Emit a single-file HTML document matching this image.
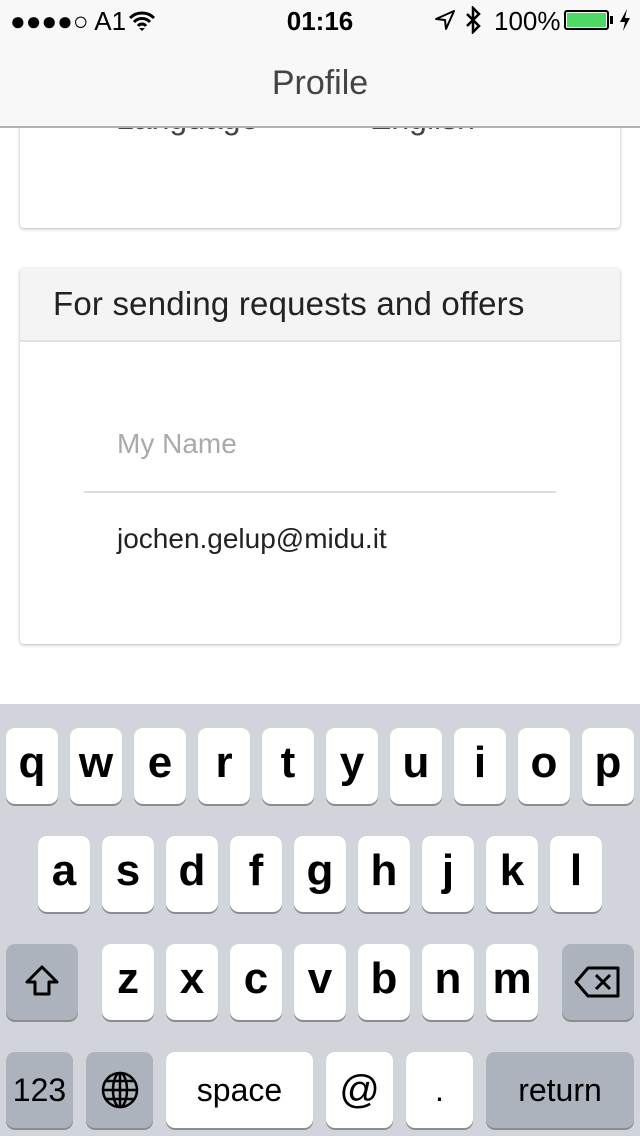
<!DOCTYPE html>
<html><head><meta charset="utf-8"><style>
*{margin:0;padding:0;box-sizing:border-box}
body{width:640px;height:1136px;background:#fff;font-family:"Liberation Sans",Arial,sans-serif;position:relative;overflow:hidden}
.abs{position:absolute}
.nav{left:0;top:0;width:640px;height:128px;background:#f8f8f8;border-bottom:2px solid #b2b2b2;z-index:5}
.card{left:20px;width:600px;background:#fff;border-radius:4px;box-shadow:0 1px 3px rgba(0,0,0,.3)}
.kb{left:0;top:704px;width:640px;height:432px;background:#d1d5db}
.k{position:absolute;width:52px;height:76px;background:#fff;border-radius:9px;box-shadow:0 2px 0 #8a8c90;font-size:44px;font-weight:bold;color:#000;text-align:center;line-height:70px}
.g{background:#acb3bd}
.s{font-size:32px;font-weight:normal;line-height:76px}
</style></head><body>
<div class="abs card" style="top:100px;height:128px"></div>
<div class="abs" style="left:116px;top:100px;font-size:32px;color:#444">Language</div>
<div class="abs" style="left:370px;top:100px;font-size:32px;color:#444">English</div>
<div class="abs card" style="top:268px;height:376px;overflow:hidden">
  <div style="height:74px;background:#f4f4f4;border-bottom:2px solid #e2e2e2;font-size:33px;color:#222;padding:17px 0 0 33px;white-space:nowrap;letter-spacing:0.2px">For sending requests and offers</div>
</div>
<div class="abs" style="left:117px;top:428px;font-size:28px;color:#aaa">My Name</div>
<div class="abs" style="left:84px;top:491px;width:472px;height:2px;background:#ddd"></div>
<div class="abs" style="left:117px;top:523px;font-size:28px;color:#222">jochen.gelup@midu.it</div>

<div class="abs nav">
  <div class="abs" style="left:10px;top:6px;font-size:26px;color:#000">●●●●○ A1</div>
  <svg class="abs" style="left:128px;top:10px" width="28" height="22" viewBox="0 0 28 22"><path d="M2 8a17 17 0 0 1 24 0M6 12a11 11 0 0 1 16 0M10 16a5 5 0 0 1 8 0" stroke="#000" stroke-width="3" fill="none"/><path d="M11 18l3 3 3-3z" fill="#000"/></svg>
  <div class="abs" style="left:0;width:640px;top:6px;text-align:center;font-size:26px;font-weight:bold">01:16</div>
  <svg class="abs" style="left:434px;top:9px" width="22" height="22" viewBox="0 0 22 22"><path d="M20 2L2 10l9 1 1 9z" stroke="#000" stroke-width="2" fill="none" stroke-linejoin="round"/></svg>
  <svg class="abs" style="left:464px;top:6px" width="18" height="28" viewBox="0 0 18 28"><path d="M3 8l12 12-6 6V2l6 6L3 20" stroke="#000" stroke-width="2.5" fill="none"/></svg>
  <div class="abs" style="left:494px;top:6px;font-size:26px">100%</div>
  <div class="abs" style="left:564px;top:10px;width:45px;height:20px;border:2px solid #000;border-radius:3px;padding:1px"><div style="width:100%;height:100%;background:#4cd964"></div></div>
  <div class="abs" style="left:610px;top:16px;width:3px;height:8px;background:#000"></div>
  <svg class="abs" style="left:618px;top:8px" width="14" height="24" viewBox="0 0 14 24"><path d="M9 1L2 14h5l-2 9 7-13H7z" fill="#000"/></svg>
  <div class="abs" style="left:0;width:640px;top:64px;text-align:center;font-size:34px;color:#444">Profile</div>
</div>

<div class="abs kb">
<div class="k" style="left:6px;top:24px">q</div><div class="k" style="left:70px;top:24px">w</div><div class="k" style="left:134px;top:24px">e</div><div class="k" style="left:198px;top:24px">r</div><div class="k" style="left:262px;top:24px">t</div><div class="k" style="left:326px;top:24px">y</div><div class="k" style="left:390px;top:24px">u</div><div class="k" style="left:454px;top:24px">i</div><div class="k" style="left:518px;top:24px">o</div><div class="k" style="left:582px;top:24px">p</div>
<div class="k" style="left:38px;top:132px">a</div><div class="k" style="left:102px;top:132px">s</div><div class="k" style="left:166px;top:132px">d</div><div class="k" style="left:230px;top:132px">f</div><div class="k" style="left:294px;top:132px">g</div><div class="k" style="left:358px;top:132px">h</div><div class="k" style="left:422px;top:132px">j</div><div class="k" style="left:486px;top:132px">k</div><div class="k" style="left:550px;top:132px">l</div>
<div class="k g" style="left:6px;top:240px;width:72px"><svg width="40" height="40" viewBox="0 0 40 40" style="margin-top:18px"><path d="M20 5L5 20h8v12h14V20h8z" stroke="#000" stroke-width="3" fill="none" stroke-linejoin="round"/></svg></div>
<div class="k" style="left:102px;top:240px">z</div><div class="k" style="left:166px;top:240px">x</div><div class="k" style="left:230px;top:240px">c</div><div class="k" style="left:294px;top:240px">v</div><div class="k" style="left:358px;top:240px">b</div><div class="k" style="left:422px;top:240px">n</div><div class="k" style="left:486px;top:240px">m</div>
<div class="k g" style="left:562px;top:240px;width:72px"><svg width="48" height="34" viewBox="0 0 48 34" style="margin-top:21px"><path d="M14 3h30v28H14L2 17z" stroke="#000" stroke-width="3" fill="none" stroke-linejoin="round"/><path d="M22 10l14 14M36 10L22 24" stroke="#000" stroke-width="3"/></svg></div>
<div class="k g s" style="left:6px;top:348px;width:67px">123</div>
<div class="k g" style="left:86px;top:348px;width:67px"><svg width="40" height="40" viewBox="0 0 40 40" style="margin-top:18px" fill="none" stroke="#000" stroke-width="2.5"><circle cx="20" cy="20" r="17"/><ellipse cx="20" cy="20" rx="7" ry="17"/><path d="M20 3v34M3 20h34M6 11h28M6 29h28"/></svg></div>
<div class="k s" style="left:166px;top:348px;width:147px">space</div>
<div class="k s" style="left:326px;top:348px;width:67px;font-size:40px">@</div>
<div class="k s" style="left:406px;top:348px;width:67px">.</div>
<div class="k g s" style="left:486px;top:348px;width:148px">return</div>
</div>
</body></html>
